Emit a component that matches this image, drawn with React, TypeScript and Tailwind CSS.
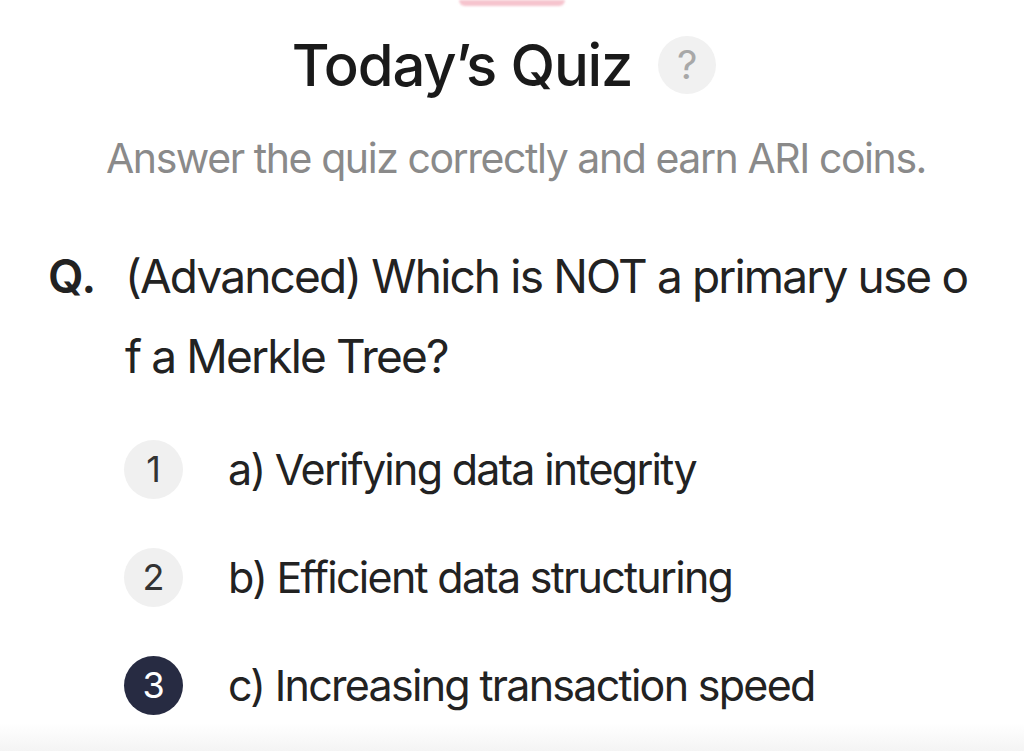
import React from "react";

const font = { fontFamily: "Inter, 'Noto Sans', sans-serif" };

function Option({ n, text, active }: { n: number; text: string; active?: boolean }) {
  return (
    <div className="flex items-center h-[108px]">
      <div
        className={
          active
            ? "w-[59px] h-[59px] rounded-full bg-[#272b42] text-white flex items-center justify-center text-[36px]"
            : "w-[59px] h-[59px] rounded-full bg-[#f0f0f0] text-[#333] flex items-center justify-center text-[36px]"
        }
      >
        {n}
      </div>
      <div className="ml-[45px] text-[43px] text-[#222] tracking-[-0.04em]">{text}</div>
    </div>
  );
}

export default function App() {
  return (
    <div className="w-[1024px] h-[751px] bg-white overflow-hidden flex flex-col relative" style={font}>
      <div className="w-[106px] h-[6px] mx-auto bg-[#f6c4ce] rounded-b-full blur-[1px]" />
      <div className="flex items-center justify-center mt-[28px] h-[62px]">
        <span className="text-[58px] font-medium text-[#1a1a1a] tracking-[-0.02em] ml-[-16px]">Today’s Quiz</span>
        <span className="ml-[26px] w-[58px] h-[58px] rounded-full bg-[#f1f1f1] text-[#a8a8a8] flex items-center justify-center text-[40px]">?</span>
      </div>
      <div className="mt-[37px] text-center text-[41px] text-[#8a8a8a] tracking-[-0.035em] h-[50px] leading-[50px] pl-[8px]">
        Answer the quiz correctly and earn ARI coins.
      </div>
      <div className="mt-[53px] flex pl-[48px] pr-[20px]">
        <div className="text-[46px] font-semibold text-[#222] w-[77px] leading-[80px]">Q.</div>
        <div className="text-[46px] text-[#222] tracking-[-0.04em] leading-[80px] whitespace-nowrap">
          (Advanced) Which is NOT a primary use o<br />f a Merkle Tree?
        </div>
      </div>
      <div className="mt-[19px] pl-[124px] flex flex-col">
        <Option n={1} text="a) Verifying data integrity" />
        <Option n={2} text="b) Efficient data structuring" />
        <Option n={3} text="c) Increasing transaction speed" active />
      </div>
      <div className="absolute left-0 right-0 bottom-0 h-[28px] bg-gradient-to-b from-white to-[#f4f4f4]" />
    </div>
  );
}
